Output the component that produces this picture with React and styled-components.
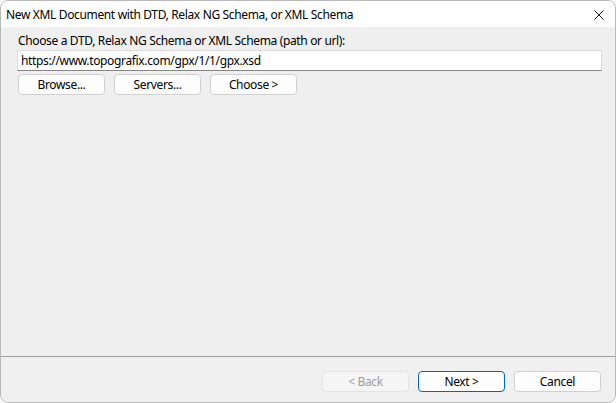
import React from "react";
import styled, { createGlobalStyle } from "styled-components";

const GlobalStyle = createGlobalStyle`
  html, body {
    margin: 0;
    padding: 0;
    background: #ffffff;
  }
  body {
    font-family: "Noto Sans", "Open Sans", sans-serif;
    font-size: 12px;
    letter-spacing: -0.35px;
    color: #000;
  }
`;

const App = () => {
  return (
    <>
      <GlobalStyle />
      <Window>
        <TitleBar>
          <Title>New XML Document with DTD, Relax NG Schema, or XML Schema</Title>
          <CloseButton aria-label="Close">
            <svg width="10" height="10" viewBox="0 0 10 10">
              <path d="M0.5 0.5 L9.5 9.5 M9.5 0.5 L0.5 9.5" stroke="#1a1a1a" strokeWidth="1" fill="none" />
            </svg>
          </CloseButton>
        </TitleBar>

        <Body>
          <Label>Choose a DTD, Relax NG Schema or XML Schema (path or url):</Label>
          <UrlInput type="text" defaultValue="https://www.topografix.com/gpx/1/1/gpx.xsd" />
          <ButtonRow>
            <Button>Browse...</Button>
            <Button>Servers...</Button>
            <Button>Choose &gt;</Button>
          </ButtonRow>
        </Body>

        <Footer>
          <Button disabled>&lt; Back</Button>
          <Button $primary>Next &gt;</Button>
          <Button>Cancel</Button>
        </Footer>
      </Window>
    </>
  );
};

export default App;

const Window = styled.div`
  box-sizing: border-box;
  width: 616px;
  height: 403px;
  display: flex;
  flex-direction: column;
  border: 1px solid #b9b9b9;
  border-radius: 8px;
  overflow: hidden;
  background: #f0f0f0;
`;

const TitleBar = styled.div`
  height: 26px;
  display: flex;
  align-items: center;
  justify-content: space-between;
  background: #ffffff;
  padding: 0 11px 0 5px;
`;

const Title = styled.span`
  font-size: 12px;
  white-space: nowrap;
`;

const CloseButton = styled.div`
  width: 10px;
  height: 10px;
  display: flex;
  margin-top: 1px;
`;

const Body = styled.div`
  flex: 1;
  display: flex;
  flex-direction: column;
  padding: 6px 13px 0 16px;
  background: #efefef;
`;

const Label = styled.div`
  line-height: 16px;
  padding-left: 1px;
  margin-bottom: 1px;
`;

const UrlInput = styled.input`
  box-sizing: border-box;
  width: 585px;
  height: 21px;
  border: 1px solid #dcdcdc;
  border-bottom-color: #868686;
  background: #fff;
  font-family: inherit;
  font-size: 12px;
  letter-spacing: inherit;
  padding: 0 3px;
  outline: none;
  color: #000;
`;

const ButtonRow = styled.div`
  display: flex;
  gap: 9px;
  margin-top: 3px;
  padding-left: 1px;
`;

const Button = styled.button`
  box-sizing: border-box;
  width: 87px;
  height: 21px;
  border: 1px solid ${(p) => (p.$primary ? "#0067c0" : p.disabled ? "#e3e3e3" : "#d0d0d0")};
  border-radius: 4px;
  background: ${(p) => (p.disabled ? "#f5f5f5" : "#fdfdfd")};
  color: ${(p) => (p.disabled ? "#9d9d9d" : "#000")};
  font-family: inherit;
  font-size: 12px;
  letter-spacing: inherit;
  padding: 0;
  cursor: pointer;
`;

const Footer = styled.div`
  height: 46px;
  box-sizing: border-box;
  border-top: 1px solid #a0a0a0;
  display: flex;
  justify-content: flex-end;
  gap: 9px;
  padding: 14px 14px 0 0;
  background: #f0f0f0;
`;
